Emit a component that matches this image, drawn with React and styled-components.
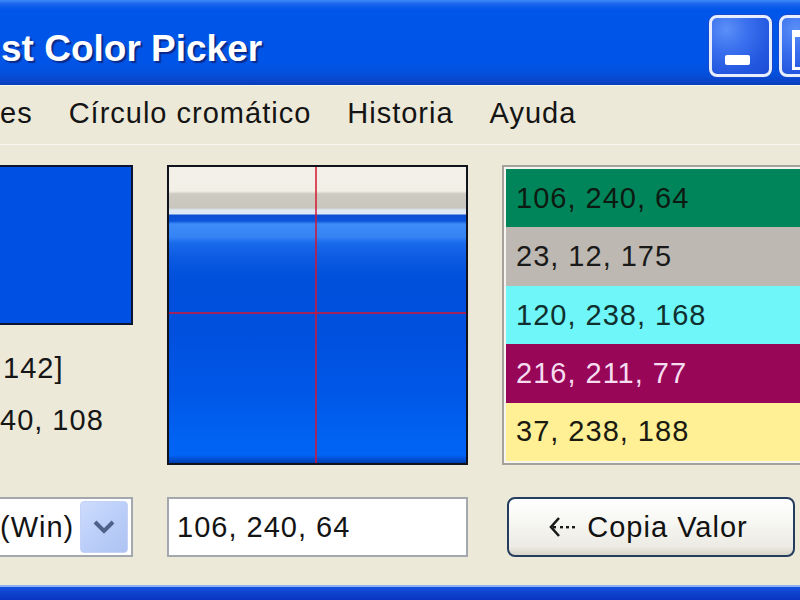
import React from "react";
import styled, { createGlobalStyle } from "styled-components";

const GlobalStyle = createGlobalStyle`
  html, body {
    margin: 0;
    padding: 0;
    background: #ece9d8;
  }
  body {
    font-family: "Liberation Sans", Arial, sans-serif;
  }
`;

const history = [
  { value: "106, 240, 64", bg: "#00855a", fg: "#0d1a12" },
  { value: "23, 12, 175", bg: "#bdb9b2", fg: "#1a1a1a" },
  { value: "120, 238, 168", bg: "#6ef6f8", fg: "#10302f" },
  { value: "216, 211, 77", bg: "#980658", fg: "#f6dcef" },
  { value: "37, 238, 188", bg: "#fff096", fg: "#1a1a10" },
];

// dashed left arrow drawn in front of the button label
const DashedArrow = () => (
  <svg width="30" height="24" viewBox="0 0 30 24">
    <path d="M11 3 L3 12 L11 21" fill="none" stroke="#1a1a1a" strokeWidth="2.6" />
    <rect x="5" y="11" width="3" height="2.4" fill="#1a1a1a" />
    <rect x="12" y="11" width="3" height="2.4" fill="#1a1a1a" />
    <rect x="18" y="11" width="3" height="2.4" fill="#1a1a1a" />
    <rect x="24" y="11" width="3" height="2.4" fill="#1a1a1a" />
  </svg>
);

const App = () => (
  <>
    <GlobalStyle />
    <Window>
      <TitleBar>
        <Title>st Color Picker</Title>
        <Caption>
          <CaptionButton>
            <MinGlyph />
          </CaptionButton>
          <CaptionButton>
            <MaxGlyph />
          </CaptionButton>
        </Caption>
      </TitleBar>

      <MenuBar>
        <MenuItem $first>es</MenuItem>
        <MenuItem>Círculo cromático</MenuItem>
        <MenuItem>Historia</MenuItem>
        <MenuItem>Ayuda</MenuItem>
      </MenuBar>

      <Body>
        <LeftColumn>
          <Swatch />
          <Readout>142]</Readout>
          <Readout>40, 108</Readout>
        </LeftColumn>

        <Picker>
          <CrossV />
          <CrossH />
        </Picker>

        <HistoryList>
          {history.map((h) => (
            <HistoryRow key={h.value} $bg={h.bg} $fg={h.fg}>
              {h.value}
            </HistoryRow>
          ))}
        </HistoryList>

        <Combo>
          <ComboText>(Win)</ComboText>
          <ComboArrow>
            <svg width="24" height="16" viewBox="0 0 24 16">
              <path d="M3 3 L12 12 L21 3" fill="none" stroke="#4d6189" strokeWidth="4" />
            </svg>
          </ComboArrow>
        </Combo>

        <ValueInput>106, 240, 64</ValueInput>

        <CopyButton>
          <DashedArrow />
          <span>Copia Valor</span>
        </CopyButton>
      </Body>

      <BottomFrame />
    </Window>
  </>
);

export default App;

const Window = styled.div`
  width: 800px;
  height: 600px;
  overflow: hidden;
  display: flex;
  flex-direction: column;
  background: #ece9d8;
`;

const TitleBar = styled.div`
  height: 85px;
  flex-shrink: 0;
  display: flex;
  align-items: flex-start;
  background: linear-gradient(
    to bottom,
    #3d8bf7 0px,
    #1a64ee 4px,
    #0055ea 10px,
    #0055e8 60px,
    #0450dc 74px,
    #0a43c6 82px,
    #0a3cb8 85px
  );
`;

const Title = styled.div`
  flex: 1;
  padding-top: 28px;
  padding-left: 1px;
  font-family: "Liberation Sans", Arial, sans-serif;
  font-weight: bold;
  font-size: 37px;
  line-height: 42px;
  color: #ffffff;
  text-shadow: 2px 2px 1px #0a2a8a;
  white-space: nowrap;
`;

const Caption = styled.div`
  display: flex;
  gap: 7px;
  padding-top: 15px;
  margin-right: -42px;
`;

const CaptionButton = styled.div`
  width: 57px;
  height: 56px;
  border: 3px solid #e6eeff;
  border-radius: 8px;
  position: relative;
  background: radial-gradient(
    circle at 25% 20%,
    #5b8ff7 0%,
    #3a70ee 35%,
    #2458e0 70%,
    #1c4cd6 100%
  );
  box-shadow: 0 0 0 1px #1b49c8;
`;

const MinGlyph = styled.div`
  position: absolute;
  left: 13px;
  top: 37px;
  width: 25px;
  height: 10px;
  border-radius: 2px;
  background: #ffffff;
`;

const MaxGlyph = styled.div`
  position: absolute;
  left: 10px;
  top: 12px;
  width: 30px;
  height: 30px;
  border: 3px solid #ffffff;
  border-top-width: 7px;
`;

const MenuBar = styled.div`
  height: 58px;
  flex-shrink: 0;
  display: flex;
  align-items: center;
  border-top: 1px solid #f6f5ee;
  border-bottom: 1px solid #f8f7f2;
  background: #ece9d8;
`;

const MenuItem = styled.div`
  padding-left: ${(p) => (p.$first ? "0" : "18px")};
  padding-right: 18px;
  font-size: 29px;
  letter-spacing: 1px;
  color: #141414;
  margin-top: -4px;
  white-space: nowrap;
`;

const Body = styled.div`
  flex: 1;
  display: grid;
  grid-template-columns: 133px 301px 340px;
  grid-template-rows: 300px 60px;
  column-gap: 34px;
  row-gap: 32px;
  padding-top: 20px;
`;

const LeftColumn = styled.div`
  display: flex;
  flex-direction: column;
`;

const Swatch = styled.div`
  height: 156px;
  background: #0050e4;
  border: 2px solid #0c1530;
  border-left: none;
  margin-bottom: 17px;
`;

const Readout = styled.div`
  font-size: 29px;
  letter-spacing: 1px;
  line-height: 52px;
  color: #161616;
  white-space: nowrap;
  padding-left: 3px;

  & + & {
    padding-left: 0;
  }
`;

const Picker = styled.div`
  position: relative;
  border: 2px solid #10131c;
  background: linear-gradient(
    to bottom,
    #f2f0e8 0px,
    #f1efe6 24px,
    #cdcac2 27px,
    #c9c6be 41px,
    #dfe9f6 43px,
    #dfe9f6 47px,
    #0b4fd2 48px,
    #0c55da 54px,
    #3d8cf8 57px,
    #3583f4 70px,
    #1a6aec 76px,
    #0d5be2 90px,
    #0050dc 110px,
    #0050de 170px,
    #0058e8 230px,
    #0062f2 270px,
    #0064f6 288px,
    #003cae 296px
  );
`;

const CrossV = styled.div`
  position: absolute;
  left: 146px;
  top: 0;
  bottom: 0;
  width: 2px;
  background: rgba(215, 20, 50, 0.75);
`;

const CrossH = styled.div`
  position: absolute;
  left: 0;
  right: 0;
  top: 145px;
  height: 2px;
  background: rgba(215, 20, 50, 0.75);
`;

const HistoryList = styled.div`
  border: 2px solid #a4a29b;
  border-right: none;
  padding: 2px 0 2px 2px;
  background: #f6f5f0;
  display: flex;
  flex-direction: column;
`;

const HistoryRow = styled.div`
  flex: 1;
  display: flex;
  align-items: center;
  padding-left: 10px;
  font-size: 29px;
  letter-spacing: 1px;
  background: ${(p) => p.$bg};
  color: ${(p) => p.$fg};
  white-space: nowrap;
`;

const Combo = styled.div`
  display: flex;
  align-items: center;
  justify-content: space-between;
  background: #ffffff;
  border: 2px solid #a2a8ad;
  border-left: none;
  padding-right: 3px;
`;

const ComboText = styled.div`
  font-size: 29px;
  letter-spacing: 1px;
  color: #141414;
  white-space: nowrap;
`;

const ComboArrow = styled.div`
  width: 46px;
  height: 50px;
  border-radius: 4px;
  display: flex;
  align-items: center;
  justify-content: center;
  background: linear-gradient(135deg, #ccdcfd 0%, #b9cdf8 55%, #aec3f2 100%);
  border: 1px solid #c3d2f5;
`;

const ValueInput = styled.div`
  display: flex;
  align-items: center;
  padding-left: 8px;
  background: #ffffff;
  border: 2px solid #a2a8ad;
  font-size: 29px;
  letter-spacing: 1px;
  color: #141414;
  white-space: nowrap;
`;

const CopyButton = styled.div`
  margin-left: 5px;
  width: 278px;
  display: flex;
  align-items: center;
  justify-content: center;
  gap: 9px;
  padding-right: 6px;
  border: 2px solid #243c5e;
  border-radius: 8px;
  background: linear-gradient(
    to bottom,
    #ffffff 0%,
    #f7f7f3 40%,
    #ecebe4 85%,
    #d8d5c9 100%
  );
  font-size: 29px;
  letter-spacing: 1px;
  color: #111111;
  white-space: nowrap;
`;

const BottomFrame = styled.div`
  height: 13px;
  flex-shrink: 0;
  border-top: 2px solid #8fb0f2;
  background: linear-gradient(to bottom, #1550dc, #0834c0);
`;
